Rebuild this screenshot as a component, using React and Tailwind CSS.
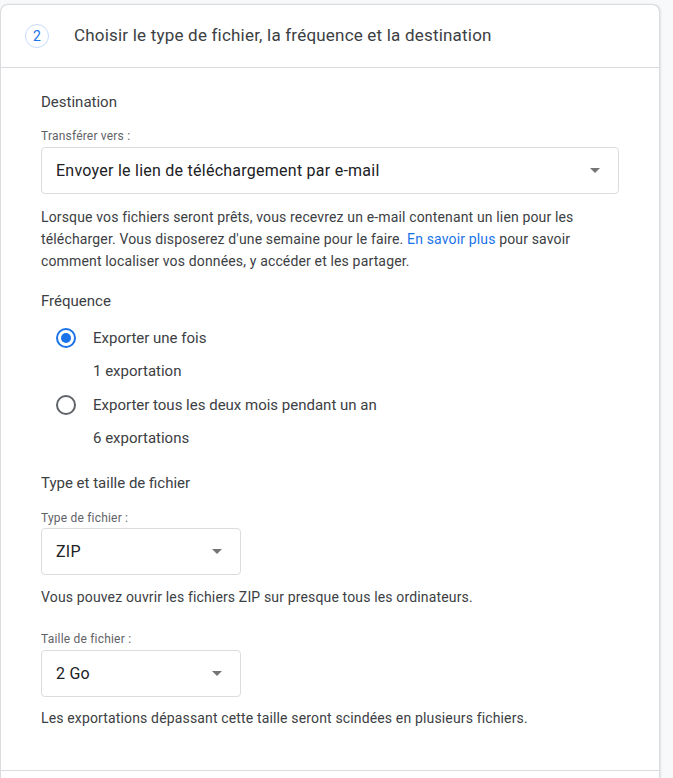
import React, { useState } from 'react';

const font = { fontFamily: 'Roboto, "Noto Sans", Arial, sans-serif' };

const Arrow = () => (
    <svg width="10" height="5" viewBox="0 0 10 5" className="shrink-0">
        <path d="M0 0 L10 0 L5 5 Z" fill="#757575" />
    </svg>
);

const Select = ({ value, className }) => (
    <div className={`h-[47px] border border-[#dadce0] rounded-[4px] flex items-center justify-between pl-[14px] pr-[18px] cursor-pointer ${className}`}>
        <span className="text-[16px] tracking-[0.25px] text-[#202124]">{value}</span>
        <Arrow />
    </div>
);

const Radio = ({ checked }) => (
    <div className={`w-5 h-5 rounded-full border-2 flex items-center justify-center shrink-0 ${checked ? 'border-[#1a73e8]' : 'border-[#5f6368]'}`}>
        {checked && <div className="w-[10px] h-[10px] rounded-full bg-[#1a73e8]"></div>}
    </div>
);

const App = () => {
    const [frequency, setFrequency] = useState('once');

    const options = [
        { id: 'once', label: 'Exporter une fois', sub: '1 exportation' },
        { id: 'bimonthly', label: 'Exporter tous les deux mois pendant un an', sub: '6 exportations' },
    ];

    return (
        <div className="min-h-screen bg-[#f8f9fa] pt-1 pr-[13px]" style={font}>
            <div className="bg-white border-x border-t border-[#dadce0] rounded-t-lg shadow-[1px_0_2px_rgba(60,64,67,0.12)]">
                {/* Step header */}
                <div className="h-[63px] border-b border-[#dadce0] flex items-center pl-[24px] gap-[25px]">
                    <div className="w-6 h-6 rounded-full border border-[#c6dafc] flex items-center justify-center text-[14px] text-[#1a73e8]">
                        2
                    </div>
                    <span className="text-[17px] tracking-[0.2px] text-[#3c4043]">Choisir le type de fichier, la fréquence et la destination</span>
                </div>

                {/* Content */}
                <div className="px-[40px] pt-6 pb-[42px] border-b border-[#dadce0] text-[14px] leading-5 tracking-[0.15px] text-[#3c4043]">
                    <div className="text-[15px] tracking-normal">Destination</div>
                    <div className="mt-4 text-[12px] leading-4 tracking-[0.2px] text-[#5f6368]">Transférer vers :</div>
                    <Select value="Envoyer le lien de téléchargement par e-mail" className="mt-[3px] w-full" />
                    <p className="mt-3 leading-[22px]">
                        Lorsque vos fichiers seront prêts, vous recevrez un e-mail contenant un lien pour les télécharger. Vous disposerez d'une semaine pour le faire. <a href="#" className="text-[#1a73e8]">En savoir plus</a> pour savoir comment localiser vos données, y accéder et les partager.
                    </p>

                    <div className="mt-[19px] text-[15px] tracking-normal">Fréquence</div>
                    <div className="mt-[17px] flex flex-col gap-[14px] text-[15px] tracking-normal">
                        {options.map((opt) => (
                            <div key={opt.id} className="cursor-pointer" onClick={() => setFrequency(opt.id)}>
                                <div className="flex items-center pl-[15px] gap-[17px]">
                                    <Radio checked={frequency === opt.id} />
                                    <span>{opt.label}</span>
                                </div>
                                <div className="mt-[13px] pl-[52px]">{opt.sub}</div>
                            </div>
                        ))}
                    </div>

                    <div className="mt-[25px] text-[15px] tracking-normal">Type et taille de fichier</div>
                    <div className="mt-[17px] text-[12px] leading-4 tracking-[0.2px] text-[#5f6368]">Type de fichier :</div>
                    <Select value="ZIP" className="mt-[2px] w-[200px]" />
                    <div className="mt-3">Vous pouvez ouvrir les fichiers ZIP sur presque tous les ordinateurs.</div>

                    <div className="mt-6 text-[12px] leading-4 tracking-[0.2px] text-[#5f6368]">Taille de fichier :</div>
                    <Select value="2 Go" className="mt-[3px] w-[200px]" />
                    <div className="mt-[11px]">Les exportations dépassant cette taille seront scindées en plusieurs fichiers.</div>
                </div>

                <div className="h-10"></div>
            </div>
        </div>
    );
};

export default App;
